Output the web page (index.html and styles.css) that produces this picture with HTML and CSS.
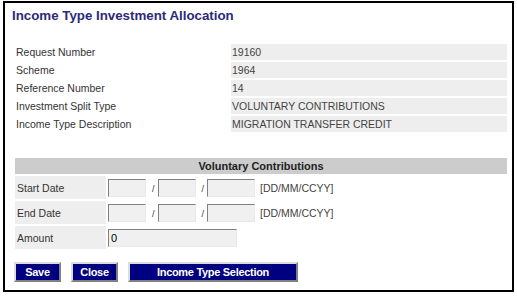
FILE: index.html
```html
<!DOCTYPE html>
<html lang="en">
<head>
    <meta charset="UTF-8">
    <title>Income Type Investment Allocation</title>
    <link rel="stylesheet" href="styles.css">
</head>
<body>
    <div class="frame">
        <h1>Income Type Investment Allocation</h1>

        <table class="detalhes">
            <tr><td class="rotulo">Request Number</td><td class="valor">19160</td></tr>
            <tr><td class="rotulo">Scheme</td><td class="valor">1964</td></tr>
            <tr><td class="rotulo">Reference Number</td><td class="valor">14</td></tr>
            <tr><td class="rotulo">Investment Split Type</td><td class="valor">VOLUNTARY CONTRIBUTIONS</td></tr>
            <tr><td class="rotulo">Income Type Description</td><td class="valor">MIGRATION TRANSFER CREDIT</td></tr>
        </table>

        <table class="contribuicoes">
            <tr><th colspan="2">Voluntary Contributions</th></tr>
            <tr>
                <td class="campo">Start Date</td>
                <td class="entrada">
                    <div class="datas">
                        <input type="text" class="dia"><span class="barra">/</span>
                        <input type="text" class="mes"><span class="barra">/</span>
                        <input type="text" class="ano"><span class="formato">[DD/MM/CCYY]</span>
                    </div>
                </td>
            </tr>
            <tr>
                <td class="campo">End Date</td>
                <td class="entrada">
                    <div class="datas">
                        <input type="text" class="dia"><span class="barra">/</span>
                        <input type="text" class="mes"><span class="barra">/</span>
                        <input type="text" class="ano"><span class="formato">[DD/MM/CCYY]</span>
                    </div>
                </td>
            </tr>
            <tr>
                <td class="campo">Amount</td>
                <td class="entrada"><div class="datas"><input type="text" class="valor-campo" value="0"></div></td>
            </tr>
        </table>

        <div class="botoes">
            <button class="btn-save">Save</button>
            <button class="btn-close">Close</button>
            <button class="btn-income">Income Type Selection</button>
        </div>
    </div>
</body>
</html>
```

FILE: styles.css
```css
body {
    margin: 0;
    font-family: "Liberation Sans", Arial, sans-serif;
    background: #fff;
}
.frame {
    margin: 1px 0 0 3px;
    width: 507px;
    height: 287px;
    border: 2px solid #000;
}
h1 {
    margin: 4px 0 0 7px;
    font-size: 13.3px;
    line-height: 17px;
    color: #2b2b7a;
}
table {
    border-collapse: separate;
    border-spacing: 0 2px;
    margin-left: 10px;
    width: 492px;
    font-size: 10.5px;
}
.detalhes {
    margin-top: 18px;
}
.detalhes td {
    height: 16px;
    padding: 0 0 0 1px;
    color: #333;
}
.detalhes .rotulo {
    width: 215px;
}
.detalhes .valor {
    background-color: #eeeeee;
    padding-left: 1px;
    color: #444;
}
.contribuicoes {
    margin-top: 22px;
}
.contribuicoes th {
    background-color: #cccccc;
    height: 16px;
    padding: 0;
    font-size: 11px;
    color: #222;
}
.contribuicoes td {
    height: 23px;
    padding: 0;
}
.campo {
    width: 89px;
    background-color: #eeeeee;
    padding-left: 2px !important;
    color: #333;
}
.entrada {
    padding-left: 2px !important;
    color: #333;
}
.datas {
    display: flex;
    align-items: center;
}
input {
    height: 18px;
    box-sizing: border-box;
    border: 1px solid;
    border-color: #808080 #e8e8e8 #e8e8e8 #808080;
    background-color: #f0f0f0;
    font-family: "Liberation Sans", Arial, sans-serif;
    font-size: 11px;
    padding: 0 2px;
    margin: 0;
}
.dia, .mes {
    width: 38px;
}
.ano {
    width: 48px;
}
.valor-campo {
    width: 129px;
}
.barra {
    font-size: 9px;
    margin: 2px 3px 0 6px;
}
.formato {
    margin-left: 5px;
    color: #444;
}
.botoes {
    display: flex;
    gap: 10px;
    margin: 11px 0 0 9px;
}
button {
    height: 20px;
    padding: 0;
    font-family: "Liberation Sans", Arial, sans-serif;
    font-size: 11px;
    letter-spacing: -0.3px;
    font-weight: bold;
    color: #fff;
    background-color: #000080;
    border: 2px solid;
    border-color: #dcdcdc #808080 #808080 #dcdcdc;
}
.btn-save {
    width: 47px;
}
.btn-close {
    width: 47px;
}
.btn-income {
    width: 170px;
}
```
